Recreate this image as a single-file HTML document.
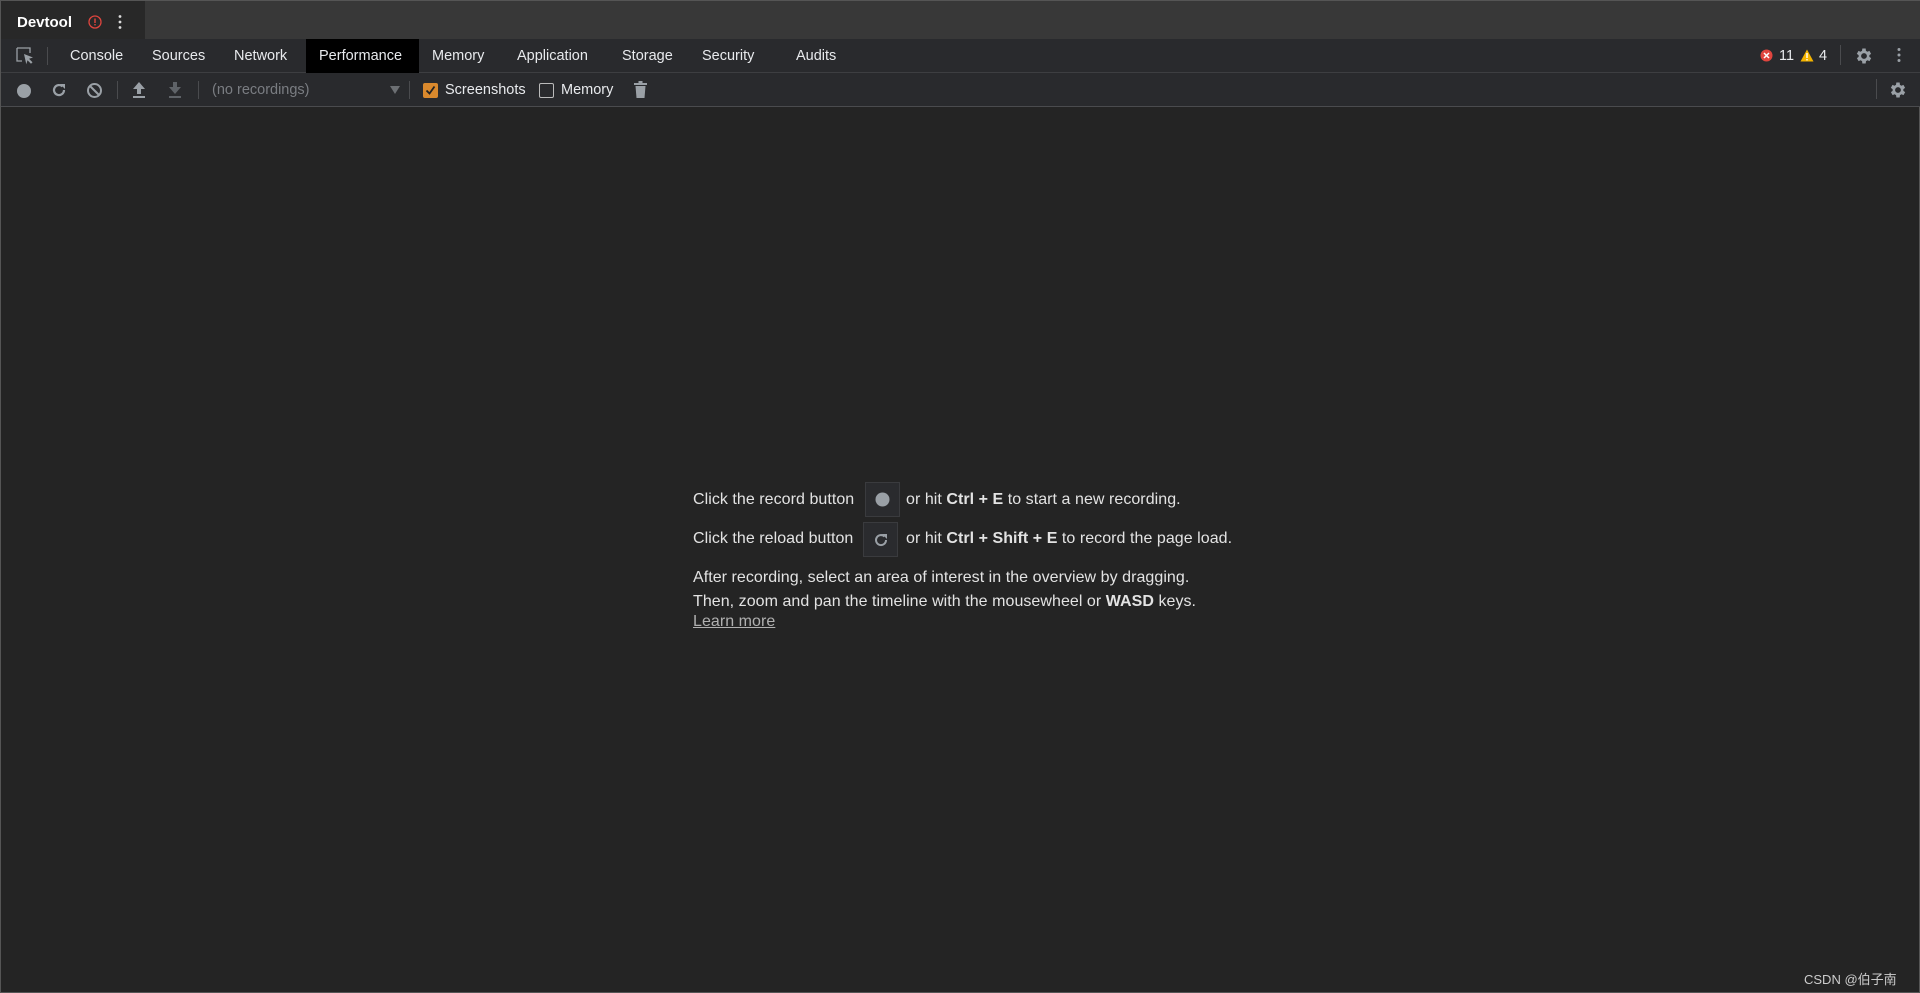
<!DOCTYPE html>
<html><head><meta charset="utf-8"><style>
*{margin:0;padding:0;box-sizing:border-box}
body{width:1920px;height:993px;background:#242424;font-family:"Liberation Sans","Noto Sans CJK SC",sans-serif;color:#e8eaed;position:relative;overflow:hidden;border:1px solid #555}
.a{position:absolute;white-space:nowrap}
#title{left:0;top:0;width:1920px;height:38px;background:#383838}
#tab{left:0;top:0;width:144px;height:38px;background:#282828}
#tb1{left:0;top:38px;width:1920px;height:34px;background:#292a2d;border-bottom:1px solid #3d3e41}
#tb2{left:0;top:72px;width:1920px;height:34px;background:#292a2d;border-bottom:1px solid #4a4b4e}
.t{font-size:14.5px;top:47px;color:#e8eaed}
.sep{width:1px;background:#4a4b4e}
.txt{font-size:16px;letter-spacing:0.05px;color:#e3e3e3;left:692px}
.box{position:absolute;width:35px;height:35px;background:#2a2b2e;border:1px solid #3a3b3e}
b{font-weight:bold}
</style></head><body>
<div class="a" id="title"></div>
<div class="a" id="tab"></div>
<div class="a" style="left:16px;top:13px;font-size:15px;font-weight:bold;color:#fff">Devtool</div>
<svg class="a" style="left:87px;top:14px" width="14" height="14"><circle cx="7" cy="7" r="6" fill="none" stroke="#e0453e" stroke-width="1.3"/><rect x="6.3" y="3.5" width="1.4" height="4.5" fill="#e0453e"/><rect x="6.3" y="9" width="1.4" height="1.4" fill="#e0453e"/></svg>
<svg class="a" style="left:116px;top:13px" width="6" height="16"><circle cx="3" cy="2.5" r="1.4" fill="#ddd"/><circle cx="3" cy="8" r="1.4" fill="#ddd"/><circle cx="3" cy="13.5" r="1.4" fill="#ddd"/></svg>
<div class="a" id="tb1"></div>
<svg class="a" style="left:15px;top:46px" width="20" height="18"><path d="M1 1h13v5M1 1v13h5" fill="none" stroke="#9aa0a6" stroke-width="1.3"/><path d="M8 7l9 3.5-4 1.2 3.5 3.5-1.5 1.5-3.5-3.5-1.2 4z" fill="#9aa0a6"/></svg>
<div class="a sep" style="left:46px;top:46px;height:18px"></div>
<div class="a" style="left:305px;top:38px;width:113px;height:34px;background:#000"></div>
<div class="a t" style="left:69px">Console</div>
<div class="a t" style="left:151px">Sources</div>
<div class="a t" style="left:233px">Network</div>
<div class="a t" style="left:318px">Performance</div>
<div class="a t" style="left:431px">Memory</div>
<div class="a t" style="left:516px">Application</div>
<div class="a t" style="left:621px">Storage</div>
<div class="a t" style="left:701px">Security</div>
<div class="a t" style="left:795px">Audits</div>
<svg class="a" style="left:1759px;top:48px" width="13" height="13"><circle cx="6.5" cy="6.5" r="6" fill="#e0453e"/><path d="M4 4l5 5M9 4l-5 5" stroke="#fff" stroke-width="1.5"/></svg>
<div class="a t" style="left:1778px">11</div>
<svg class="a" style="left:1799px;top:48px" width="14" height="13"><path d="M7 0.5L13.5 12.5H0.5z" fill="#f4b400"/><rect x="6.3" y="4" width="1.4" height="5" fill="#fff"/><rect x="6.3" y="10" width="1.4" height="1.4" fill="#fff"/></svg>
<div class="a t" style="left:1818px">4</div>
<div class="a sep" style="left:1839px;top:44px;height:20px"></div>
<svg class="a" style="left:1853px;top:45px" width="20" height="20" viewBox="0 0 24 24"><path fill="#9aa0a6" d="M19.4 13a7.5 7.5 0 0 0 0-2l2.1-1.6-2-3.5-2.5 1a7 7 0 0 0-1.7-1L15 3h-4l-.4 2.9a7 7 0 0 0-1.7 1l-2.5-1-2 3.5L6.6 11a7.5 7.5 0 0 0 0 2l-2.1 1.6 2 3.5 2.5-1a7 7 0 0 0 1.7 1L11 21h4l.4-2.9a7 7 0 0 0 1.7-1l2.5 1 2-3.5zM13 15.5a3.5 3.5 0 1 1 0-7 3.5 3.5 0 0 1 0 7z" transform="translate(-1 0)"/></svg>
<svg class="a" style="left:1895px;top:46px" width="6" height="16"><circle cx="3" cy="2.5" r="1.5" fill="#9aa0a6"/><circle cx="3" cy="8" r="1.5" fill="#9aa0a6"/><circle cx="3" cy="13.5" r="1.5" fill="#9aa0a6"/></svg>
<div class="a" id="tb2"></div>
<svg class="a" style="left:15px;top:82px" width="16" height="16"><circle cx="8" cy="8" r="7" fill="#9aa0a6"/></svg>
<svg class="a" style="left:50px;top:81px" width="16" height="16" viewBox="0 0 16 16"><path d="M13 8A5 5 0 1 1 11.5 4.5" fill="none" stroke="#9aa0a6" stroke-width="2.2"/><path d="M9 2h5v5z" fill="#9aa0a6"/></svg>
<svg class="a" style="left:85px;top:81px" width="17" height="17"><circle cx="8.5" cy="8.5" r="6.5" fill="none" stroke="#9aa0a6" stroke-width="2"/><path d="M4 4l9 9" stroke="#9aa0a6" stroke-width="2"/></svg>
<div class="a sep" style="left:116px;top:80px;height:18px"></div>
<svg class="a" style="left:131px;top:81px" width="14" height="16"><path d="M7 0L13 7H9v5H5V7H1z M1 14h12v2H1z" fill="#9aa0a6"/></svg>
<svg class="a" style="left:167px;top:81px" width="14" height="16"><path d="M7 12L13 5H9V0H5v5H1z M1 14h12v2H1z" fill="#5f6368"/></svg>
<div class="a sep" style="left:197px;top:80px;height:18px"></div>
<div class="a" style="left:211px;top:81px;font-size:14.5px;color:#7a7d82">(no recordings)</div>
<svg class="a" style="left:389px;top:85px" width="10" height="8"><path d="M0 0h10L5 8z" fill="#6c6f73"/></svg>
<div class="a sep" style="left:408px;top:80px;height:18px"></div>
<div class="a" style="left:422px;top:82px;width:15px;height:15px;background:#d9892d;border-radius:2px"></div>
<svg class="a" style="left:424px;top:84px" width="11" height="11"><path d="M1.5 5.5l3 3 5-7" fill="none" stroke="#222" stroke-width="1.8"/></svg>
<div class="a" style="left:444px;top:81px;font-size:14.5px">Screenshots</div>
<div class="a" style="left:538px;top:82px;width:15px;height:15px;border:1.3px solid #bbb;border-radius:2px"></div>
<div class="a" style="left:560px;top:81px;font-size:14.5px">Memory</div>
<svg class="a" style="left:633px;top:80px" width="13" height="17"><path d="M0 2h13v2H0zM4.5 0h4v2h-4zM1.5 5h10l-1 12h-8z" fill="#9aa0a6"/></svg>
<div class="a sep" style="left:1875px;top:78px;height:20px"></div>
<svg class="a" style="left:1887px;top:79px" width="20" height="20" viewBox="0 0 24 24"><path fill="#9aa0a6" d="M19.4 13a7.5 7.5 0 0 0 0-2l2.1-1.6-2-3.5-2.5 1a7 7 0 0 0-1.7-1L15 3h-4l-.4 2.9a7 7 0 0 0-1.7 1l-2.5-1-2 3.5L6.6 11a7.5 7.5 0 0 0 0 2l-2.1 1.6 2 3.5 2.5-1a7 7 0 0 0 1.7 1L11 21h4l.4-2.9a7 7 0 0 0 1.7-1l2.5 1 2-3.5zM13 15.5a3.5 3.5 0 1 1 0-7 3.5 3.5 0 0 1 0 7z" transform="translate(-1 0)"/></svg>
<div class="a txt" style="top:490px">Click the record button</div>
<div class="box" style="left:864px;top:481px"></div>
<svg class="a" style="left:874px;top:491px" width="15" height="15"><circle cx="7.5" cy="7.5" r="7" fill="#9aa0a6"/></svg>
<div class="a txt" style="left:905px;top:490px">or hit <b>Ctrl + E</b> to start a new recording.</div>
<div class="a txt" style="top:529px">Click the reload button</div>
<div class="box" style="left:862px;top:521px"></div>
<svg class="a" style="left:872px;top:531px" width="16" height="16" viewBox="0 0 16 16"><path d="M13 8A5 5 0 1 1 11.5 4.5" fill="none" stroke="#9aa0a6" stroke-width="2"/><path d="M9 2h5v5z" fill="#9aa0a6"/></svg>
<div class="a txt" style="left:905px;top:529px">or hit <b>Ctrl + Shift + E</b> to record the page load.</div>
<div class="a txt" style="top:568px">After recording, select an area of interest in the overview by dragging.</div>
<div class="a txt" style="top:592px">Then, zoom and pan the timeline with the mousewheel or <b>WASD</b> keys.</div>
<div class="a txt" style="top:612px;text-decoration:underline;color:#b0b0b0">Learn more</div>
<div class="a" style="left:1803px;top:968px;font-size:13px;color:#ccc">CSDN @伯子南</div>
</body></html>
